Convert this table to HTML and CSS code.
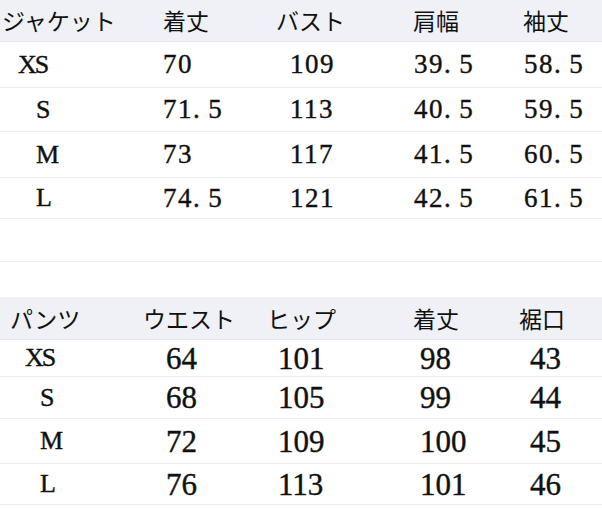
FILE: index.html
```html
<!DOCTYPE html>
<html lang="ja">
<head>
<meta charset="utf-8">
<link rel="stylesheet" href="styles.css">
</head>
<body>
<div class="page">
  <div class="tbl jacket">
    <div class="row head h42">
      <div class="c">ジャケット</div><div class="c">着丈</div><div class="c">バスト</div><div class="c">肩幅</div><div class="c">袖丈</div>
    </div>
    <div class="row body h46">
      <div class="c sz xs">XS</div><div class="c">70</div><div class="c">109</div><div class="c">39<span class="dot">.</span>5</div><div class="c">58<span class="dot">.</span>5</div>
    </div>
    <div class="row body h44">
      <div class="c sz">S</div><div class="c">71<span class="dot">.</span>5</div><div class="c">113</div><div class="c">40<span class="dot">.</span>5</div><div class="c">59<span class="dot">.</span>5</div>
    </div>
    <div class="row body h46">
      <div class="c sz">M</div><div class="c">73</div><div class="c">117</div><div class="c">41<span class="dot">.</span>5</div><div class="c">60<span class="dot">.</span>5</div>
    </div>
    <div class="row body h41">
      <div class="c sz">L</div><div class="c">74<span class="dot">.</span>5</div><div class="c">121</div><div class="c">42<span class="dot">.</span>5</div><div class="c">61<span class="dot">.</span>5</div>
    </div>
    <div class="row blank h43"></div>
  </div>

  <div class="spacer"></div>

  <div class="tbl pants">
    <div class="row head h43">
      <div class="c">パンツ</div><div class="c">ウエスト</div><div class="c">ヒップ</div><div class="c">着丈</div><div class="c">裾口</div>
    </div>
    <div class="row body h37">
      <div class="c sz xs">XS</div><div class="c">64</div><div class="c">101</div><div class="c">98</div><div class="c">43</div>
    </div>
    <div class="row body h42">
      <div class="c sz">S</div><div class="c">68</div><div class="c">105</div><div class="c">99</div><div class="c">44</div>
    </div>
    <div class="row body h45">
      <div class="c sz">M</div><div class="c">72</div><div class="c">109</div><div class="c">100</div><div class="c">45</div>
    </div>
    <div class="row body h41">
      <div class="c sz">L</div><div class="c">76</div><div class="c">113</div><div class="c">101</div><div class="c">46</div>
    </div>
  </div>
</div>
</body>
</html>
```

FILE: styles.css
```css
html, body {
  margin: 0;
  padding: 0;
  background: #ffffff;
}

.page {
  width: 602px;
  height: 519px;
  overflow: hidden;
  color: #111111;
}

.row {
  display: grid;
  align-items: center;
  box-sizing: border-box;
  border-bottom: 1px solid #ebebeb;
}

.head {
  background: #eff1f6;
  border-bottom-color: #e6e8ee;
  font-family: "Noto Sans CJK JP", "Noto Sans", sans-serif;
  font-size: 23px;
  font-weight: 400;
  line-height: 1;
}

.body {
  line-height: 1;
  font-family: "Liberation Serif", "Times New Roman", serif;
  -webkit-text-stroke: 0.4px #111111;
}

.c {
  white-space: nowrap;
}

.h37 { height: 37px; }
.h41 { height: 41px; }
.h42 { height: 42px; }
.h43 { height: 43px; }
.h44 { height: 44px; }
.h45 { height: 45px; }
.h46 { height: 46px; }

/* jacket table */
.jacket .row {
  grid-template-columns: 161px 113px 137px 110px 1fr;
}
.jacket .body {
  font-size: 27px;
  letter-spacing: 1.5px;
}
.jacket .head .c { padding-left: 2px; }
.jacket .body .c:nth-child(1) { padding-left: 36px; }
.jacket .body .c.xs { padding-left: 18px; }
.jacket .body .c:nth-child(2) { padding-left: 2px; }
.jacket .body .c:nth-child(3) { padding-left: 16px; }
.jacket .body .c:nth-child(4) { padding-left: 3px; }
.jacket .body .c:nth-child(5) { padding-left: 3px; }

.dot {
  margin-right: 7px;
}

.sz {
  font-size: 26px;
  letter-spacing: 0;
}

.sz.xs {
  letter-spacing: -2px;
}

.blank {
  border-top: 0;
}

.spacer {
  height: 35px;
}

/* pants table */
.pants .row {
  grid-template-columns: 135px 127px 143px 107px 1fr;
}
.pants .body {
  font-size: 31px;
}
.pants .body .sz {
  font-size: 26px;
}
.pants .head .c:nth-child(1) { padding-left: 10px; }
.pants .head .c:nth-child(2) { padding-left: 8px; }
.pants .head .c:nth-child(3) { padding-left: 5px; }
.pants .head .c:nth-child(4) { padding-left: 8px; }
.pants .head .c:nth-child(5) { padding-left: 7px; }
.pants .body .c:nth-child(1) { padding-left: 40px; }
.pants .body .c.xs { padding-left: 25px; }
.pants .body .c:nth-child(2) { padding-left: 31px; }
.pants .body .c:nth-child(3) { padding-left: 16px; }
.pants .body .c:nth-child(4) { padding-left: 15px; }
.pants .body .c:nth-child(5) { padding-left: 18px; }
```
